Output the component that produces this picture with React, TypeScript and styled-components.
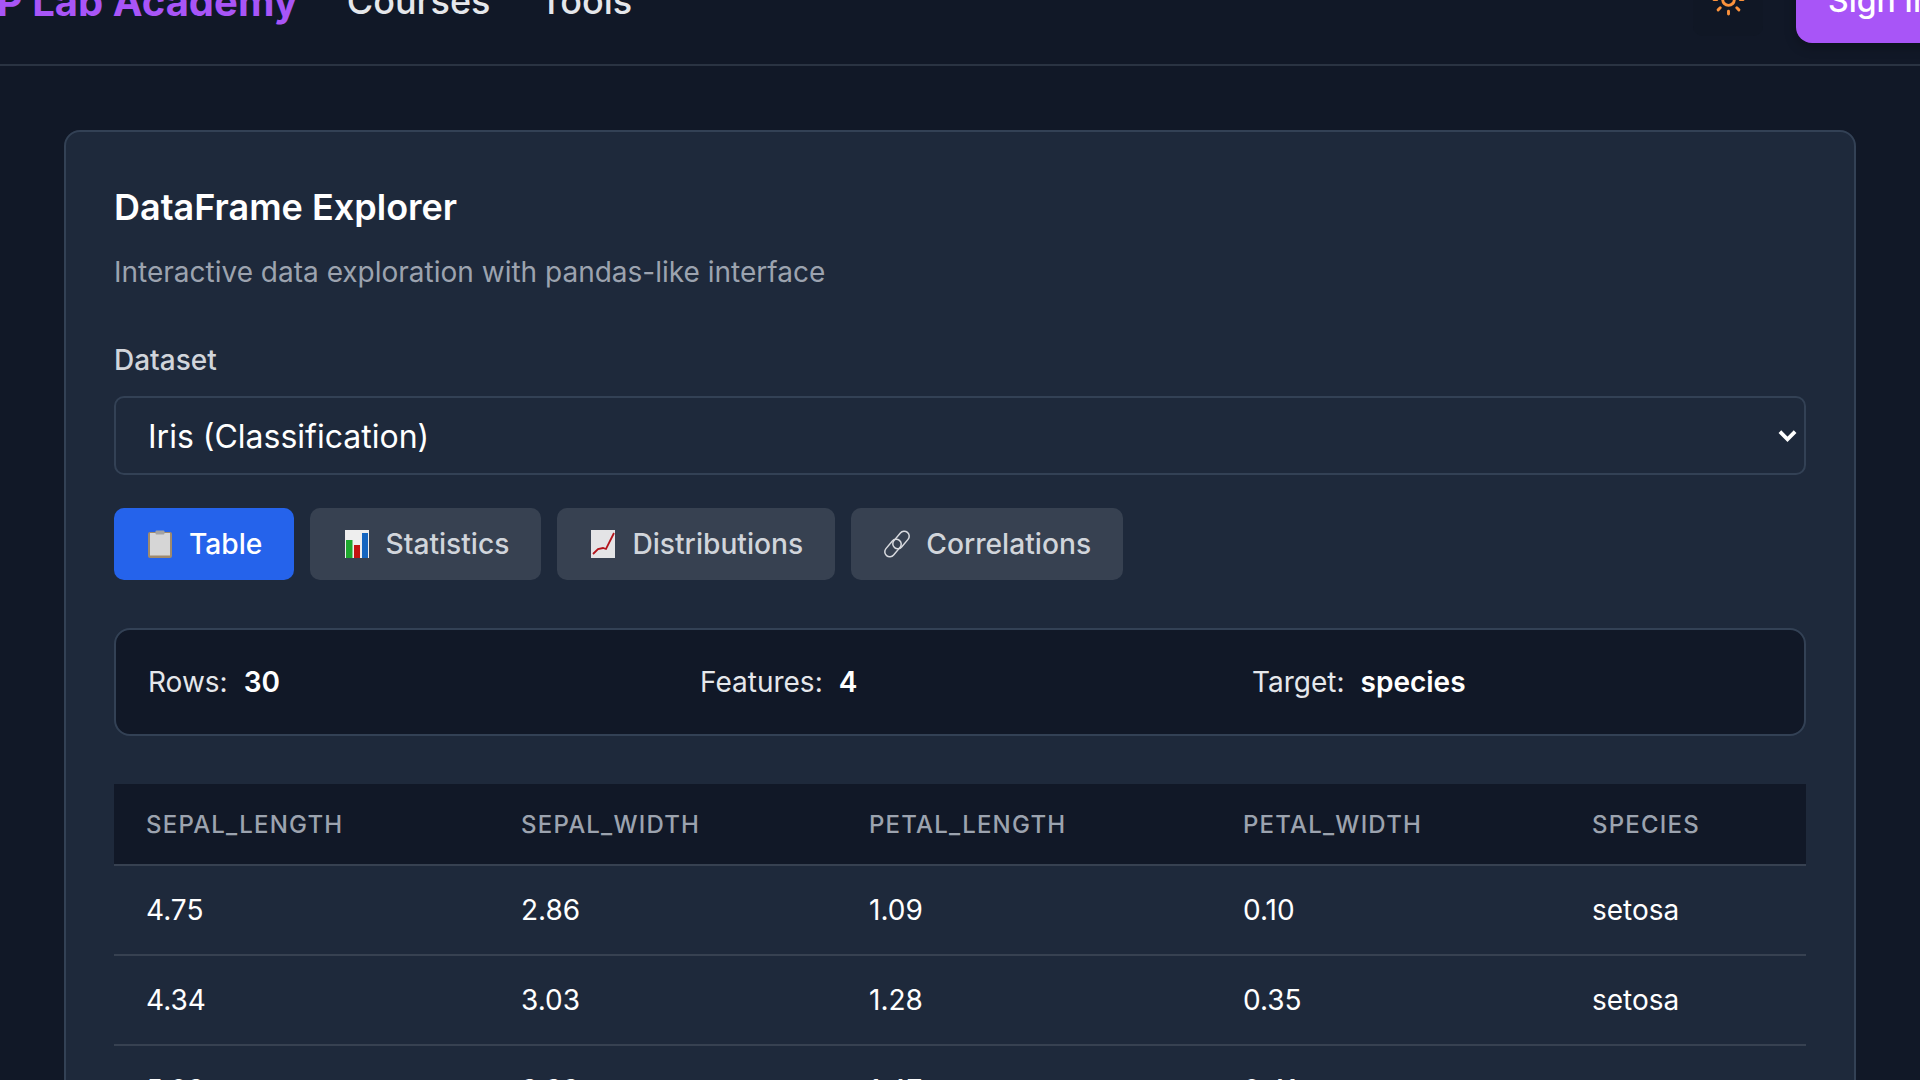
import React from "react";
import styled, { createGlobalStyle } from "styled-components";

const Global = createGlobalStyle`
  html, body {
    margin: 0;
    padding: 0;
    width: 1920px;
    height: 1080px;
    overflow: hidden;
    background-color: #111827;
    font-family: Inter, "Liberation Sans", sans-serif;
  }
  * { box-sizing: border-box; }
`;

const Page = styled.div`
  height: 1080px;
  overflow: hidden;
`;

const Nav = styled.header`
  display: flex;
  align-items: center;
  justify-content: space-between;
  margin: -64px 0 0 -70px;
  width: 2046px;
  height: 130px;
  border-bottom: 2px solid #2a3342;
  background-color: #111827;
`;

const NavLeft = styled.div`
  display: flex;
  align-items: center;
  gap: 49px;
  padding-top: 2px;
`;

const Logo = styled.div`
  font-size: 40px;
  font-weight: 700;
  color: #a855f7;
  white-space: nowrap;
`;

const NavLink = styled.a`
  font-size: 36px;
  font-weight: 500;
  color: #e5e7eb;
`;

const NavRight = styled.div`
  display: flex;
  align-items: center;
  gap: 33px;
`;

const ThemeButton = styled.button`
  display: flex;
  align-items: center;
  justify-content: center;
  width: 70px;
  height: 74px;
  margin-bottom: 2px;
  padding: 0;
  border: none;
  border-radius: 10px;
  background-color: #101725;
`;

const SignIn = styled.button`
  height: 86px;
  width: 180px;
  padding: 0 0 0 32px;
  border: none;
  border-radius: 16px;
  background-color: #a855f7;
  color: #ffffff;
  font-family: inherit;
  font-size: 32px;
  font-weight: 500;
  text-align: left;
  white-space: nowrap;
  box-shadow: 0 4px 12px rgba(0, 0, 0, 0.25);
`;

const Card = styled.main`
  margin: 64px 64px 0 64px;
  padding: 48px;
  border: 2px solid #334155;
  border-radius: 16px;
  background-color: #1e293b;
`;

const Title = styled.h2`
  margin: 0;
  font-size: 36px;
  line-height: 54px;
  font-weight: 600;
  color: #ffffff;
`;

const Subtitle = styled.p`
  margin: 16px 0 0;
  font-size: 28px;
  line-height: 44px;
  color: #9ca3af;
`;

const FieldLabel = styled.label`
  display: block;
  margin: 46px 0 16px;
  font-size: 28px;
  line-height: 40px;
  font-weight: 500;
  color: #d1d5db;
`;

const Select = styled.select`
  display: block;
  width: 100%;
  height: 79px;
  padding: 2px 32px 0;
  appearance: none;
  border: 2px solid #334155;
  border-radius: 10px;
  background-color: #1e293b;
  background-image: url("data:image/svg+xml,%3Csvg xmlns='http://www.w3.org/2000/svg' viewBox='0 0 20 20'%3E%3Cpath d='M2 6l8 8 8-8' fill='none' stroke='white' stroke-width='4'/%3E%3C/svg%3E");
  background-repeat: no-repeat;
  background-position: right 7px center;
  background-size: 19px 19px;
  color: #ffffff;
  font-family: inherit;
  font-size: 32px;
`;

const Tabs = styled.div`
  display: flex;
  gap: 16px;
  margin-top: 33px;
`;

const Tab = styled.button<{ $active?: boolean }>`
  display: flex;
  align-items: center;
  gap: 15px;
  height: 72px;
  padding: 0 32px;
  border: none;
  border-radius: 10px;
  background-color: ${(p) => (p.$active ? "#2563eb" : "#374151")};
  color: ${(p) => (p.$active ? "#ffffff" : "#d1d5db")};
  font-family: inherit;
  font-size: 28.2px;
  font-weight: 500;
`;

const TabIcon = styled.svg`
  width: 28px;
  height: 30px;
  flex: none;
`;

const Summary = styled.div`
  display: grid;
  grid-template-columns: repeat(3, 1fr);
  gap: 32px;
  align-items: center;
  height: 108px;
  margin-top: 48px;
  padding: 0 32px;
  border: 2px solid #334155;
  border-radius: 16px;
  background-color: #111827;
`;

const SummaryItem = styled.div`
  font-size: 28px;
  color: #e5e7eb;
  strong {
    margin-left: 16px;
    font-weight: 600;
    color: #ffffff;
  }
`;

const DataTable = styled.table`
  width: 100%;
  margin-top: 48px;
  border-collapse: collapse;
  table-layout: fixed;
`;

const HeadCell = styled.th<{ $w: number }>`
  width: ${(p) => p.$w}px;
  height: 81px;
  padding: 0 0 0 32px;
  border-bottom: 2px solid #374151;
  background-color: #111827;
  color: #9ca3af;
  font-size: 24px;
  font-weight: 500;
  letter-spacing: 1.2px;
  text-align: left;
  text-transform: uppercase;
`;

const Cell = styled.td`
  height: 90px;
  padding: 0 0 0 32px;
  border-bottom: 2px solid #374151;
  color: #ffffff;
  font-size: 28px;
`;

const columns: [string, number][] = [
  ["sepal_length", 375],
  ["sepal_width", 348],
  ["petal_length", 374],
  ["petal_width", 349],
  ["species", 246],
];

const rows = [
  ["4.75", "2.86", "1.09", "0.10", "setosa"],
  ["4.34", "3.03", "1.28", "0.35", "setosa"],
  ["5.03", "3.33", "1.47", "0.41", "setosa"],
];

const SunIcon = () => (
  <svg width="35" height="35" viewBox="0 0 24 24" fill="none" stroke="#fb923c" strokeWidth="2" strokeLinecap="round">
    <circle cx="12" cy="12" r="4" />
    <path d="M12 2v2M12 20v2M4.9 4.9l1.4 1.4M17.7 17.7l1.4 1.4M2 12h2M20 12h2M6.3 17.7l-1.4 1.4M19.1 4.9l-1.4 1.4" />
  </svg>
);

const ClipboardIcon = () => (
  <TabIcon viewBox="0 0 28 30">
    <rect x="2" y="3" width="24" height="26" rx="2" fill="#a08a6c" />
    <rect x="4" y="4" width="20" height="22.5" fill="#d6d6d6" />
    <rect x="9.5" y="1.5" width="9" height="4" rx="1" fill="#a3a3a3" />
  </TabIcon>
);

const BarsIcon = () => (
  <TabIcon viewBox="0 0 28 30">
    <rect x="3" y="1" width="24" height="28" fill="#eeeeee" />
    <rect x="4" y="11" width="6.5" height="18" fill="#1fa82e" />
    <rect x="12" y="16" width="6" height="13" fill="#c41212" />
    <rect x="20" y="4" width="6" height="25" fill="#1565c0" />
  </TabIcon>
);

const TrendIcon = () => (
  <TabIcon viewBox="0 0 28 30">
    <rect x="2" y="1" width="24" height="28" fill="#e4e4e6" />
    <path d="M4 25l5-5 5-1 3 1 8-16" fill="none" stroke="#b3141c" strokeWidth="1.8" />
  </TabIcon>
);

const LinkIcon = () => (
  <TabIcon viewBox="0 0 28 30" fill="none" stroke="#d8dadf" strokeWidth="1.5">
    <rect x="13" y="1" width="10" height="20" rx="5" transform="rotate(40 18 11)" />
    <rect x="5" y="9" width="10" height="20" rx="5" transform="rotate(40 10 19)" />
  </TabIcon>
);

const tabs = [
  { label: "Table", icon: <ClipboardIcon />, active: true },
  { label: "Statistics", icon: <BarsIcon /> },
  { label: "Distributions", icon: <TrendIcon /> },
  { label: "Correlations", icon: <LinkIcon /> },
];

export default function App() {
  return (
    <Page>
      <Global />
      <Nav>
        <NavLeft>
          <Logo>MCP Lab Academy</Logo>
          <NavLink>Courses</NavLink>
          <NavLink>Tools</NavLink>
        </NavLeft>
        <NavRight>
          <ThemeButton>
            <SunIcon />
          </ThemeButton>
          <SignIn>Sign In</SignIn>
        </NavRight>
      </Nav>
      <Card>
        <Title>DataFrame Explorer</Title>
        <Subtitle>Interactive data exploration with pandas-like interface</Subtitle>
        <FieldLabel>Dataset</FieldLabel>
        <Select defaultValue="iris">
          <option value="iris">Iris (Classification)</option>
        </Select>
        <Tabs>
          {tabs.map((t) => (
            <Tab key={t.label} $active={t.active}>
              {t.icon}
              {t.label}
            </Tab>
          ))}
        </Tabs>
        <Summary>
          <SummaryItem>
            Rows:<strong>30</strong>
          </SummaryItem>
          <SummaryItem>
            Features:<strong>4</strong>
          </SummaryItem>
          <SummaryItem>
            Target:<strong>species</strong>
          </SummaryItem>
        </Summary>
        <DataTable>
          <thead>
            <tr>
              {columns.map(([name, w]) => (
                <HeadCell key={name} $w={w}>
                  {name}
                </HeadCell>
              ))}
            </tr>
          </thead>
          <tbody>
            {rows.map((r) => (
              <tr key={r[0]}>
                {r.map((v, i) => (
                  <Cell key={i}>{v}</Cell>
                ))}
              </tr>
            ))}
          </tbody>
        </DataTable>
      </Card>
    </Page>
  );
}
